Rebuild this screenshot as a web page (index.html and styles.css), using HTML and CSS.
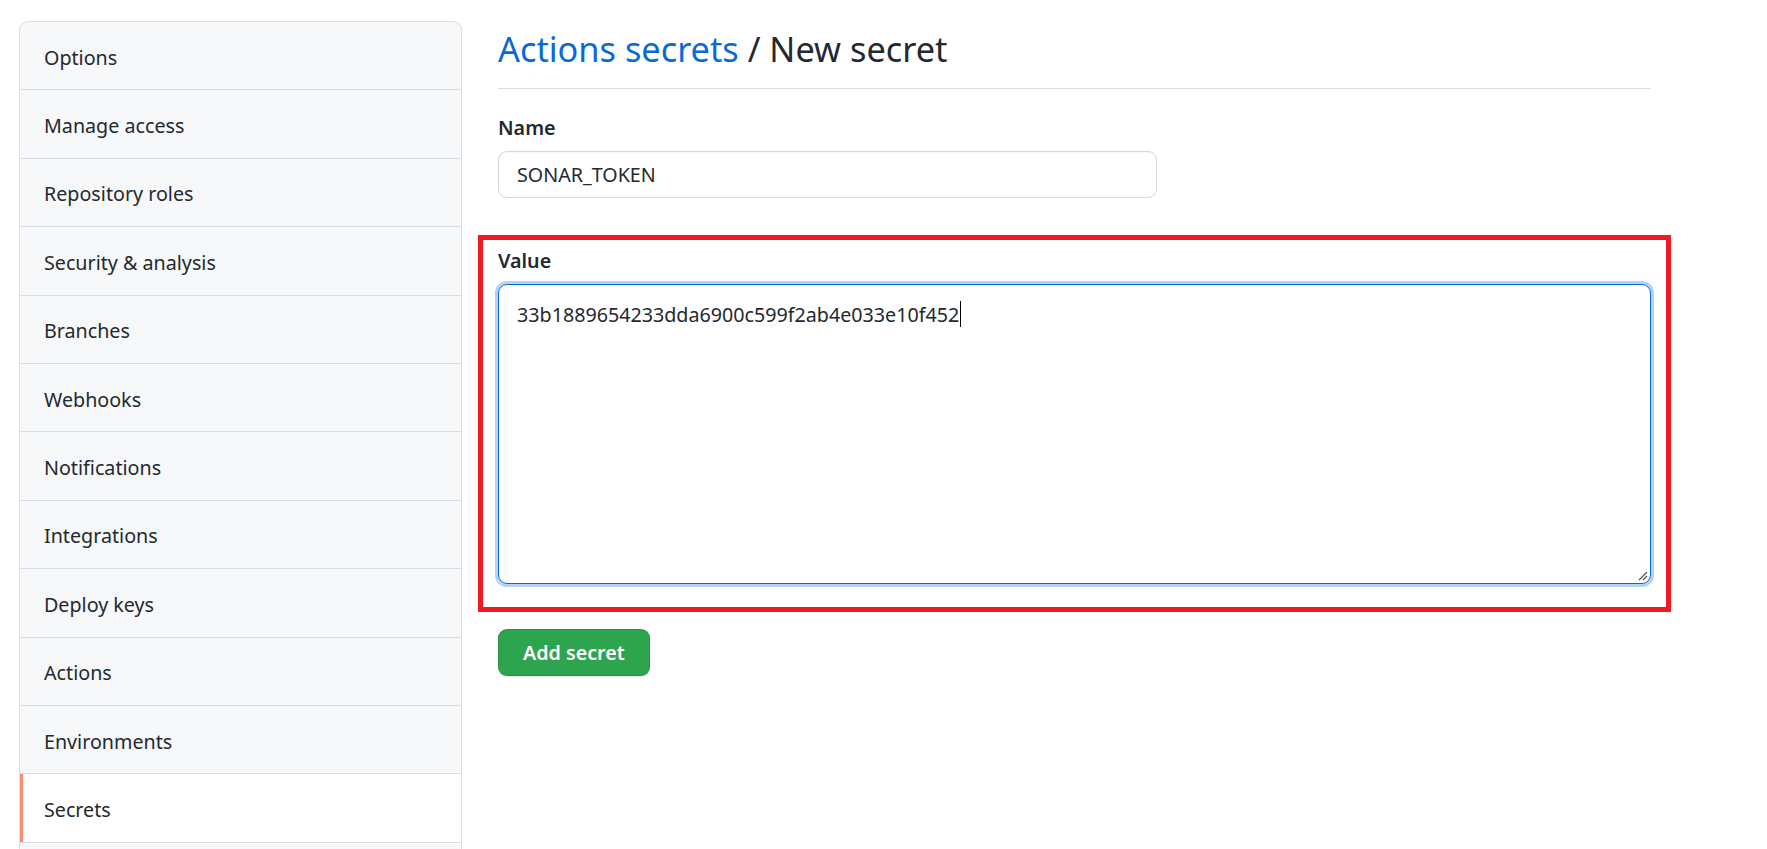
FILE: index.html
```html
<!DOCTYPE html>
<html lang="en">
<head>
<meta charset="utf-8">
<title>Actions secrets / New secret</title>
<link rel="stylesheet" href="styles.css">
</head>
<body>
<div class="layout">
  <nav class="menu">
    <a class="menu-item">Options</a>
    <a class="menu-item">Manage access</a>
    <a class="menu-item">Repository roles</a>
    <a class="menu-item">Security &amp; analysis</a>
    <a class="menu-item">Branches</a>
    <a class="menu-item">Webhooks</a>
    <a class="menu-item">Notifications</a>
    <a class="menu-item">Integrations</a>
    <a class="menu-item">Deploy keys</a>
    <a class="menu-item">Actions</a>
    <a class="menu-item">Environments</a>
    <a class="menu-item selected">Secrets</a>
  </nav>
  <main class="main">
    <div class="subhead">
      <h2 class="subhead-heading"><a class="crumb">Actions secrets</a> / New secret</h2>
    </div>
    <div class="form-group">
      <label class="label">Name</label>
      <input class="input" type="text" value="SONAR_TOKEN">
    </div>
    <div class="highlight">
      <label class="label">Value</label>
      <div class="textarea">
        <span class="value-text">33b1889654233dda6900c599f2ab4e033e10f452</span><span class="caret"></span>
        <svg class="grip" width="10" height="10" viewBox="0 0 10 10"><path d="M9 1L1 9M9 5L5 9" stroke="#555" stroke-width="1.2"/></svg>
      </div>
    </div>
    <button class="btn">Add secret</button>
  </main>
</div>
</body>
</html>
```

FILE: styles.css
```css
* { box-sizing: border-box; }
html, body { margin: 0; background: #fff; }
body {
  font-family: "Noto Sans", "Open Sans", sans-serif;
  color: #24292f;
  font-size: 19.7px;
}
.layout {
  display: flex;
  gap: 36px;
  padding: 21px 0 0 19px;
  align-items: flex-start;
}
.menu {
  width: 443px;
  flex: none;
  display: flex;
  flex-direction: column;
  background: #f6f8fa;
  border: 1px solid #d8dee4;
  border-bottom: 0;
  border-radius: 9px 9px 0 0;
  padding-bottom: 20px;
  overflow: hidden;
}
.menu-item {
  display: flex;
  align-items: center;
  height: 68.4px;
  padding: 3px 0 0 24px;
  border-bottom: 1px solid #d8dee4;
  color: #24292f;
  font-size: 19.7px;
}
.menu-item.selected {
  background: #fff;
  box-shadow: inset 3px 0 0 #fd8c73;
}
.main {
  width: 1153px;
  display: flex;
  flex-direction: column;
  align-items: flex-start;
}
.subhead {
  align-self: stretch;
  border-bottom: 1px solid #d8dee4;
  padding-top: 1px;
  padding-bottom: 12px;
  margin-bottom: 23px;
}
.subhead-heading {
  margin: 0;
  font-size: 34.3px;
  font-weight: 400;
  line-height: 54px;
}
.crumb { color: #0969da; }
.form-group {
  display: flex;
  flex-direction: column;
  align-items: flex-start;
}
.label {
  font-weight: 600;
  font-size: 19.7px;
  line-height: 31px;
  margin-bottom: 8px;
}
.input {
  width: 659px;
  height: 47px;
  border: 1px solid #d0d7de;
  border-radius: 9px;
  padding: 0 18px;
  font-family: inherit;
  font-size: 19.7px;
  color: #24292f;
  background: #fff;
  box-shadow: inset 0 1px 0 rgba(208,215,222,0.2);
}
.highlight {
  align-self: stretch;
  margin: 37px -20px 0 -20px;
  border: 5px solid #ed1c24;
  padding: 5px 15px 23px 15px;
  display: flex;
  flex-direction: column;
  align-items: stretch;
}
.highlight .label { align-self: flex-start; }
.textarea {
  position: relative;
  height: 300px;
  border: 1px solid #0969da;
  border-radius: 9px;
  box-shadow: 0 0 0 3px rgba(9,105,218,0.3);
  padding: 14px 18px;
  font-size: 19.7px;
  line-height: 31px;
  display: block;
}
.caret {
  display: inline-block;
  width: 1px;
  height: 26px;
  background: #000;
  vertical-align: -5px;
  margin-left: 1px;
}
.grip {
  position: absolute;
  right: 2px;
  bottom: 2px;
}
.btn {
  margin-top: 17px;
  height: 47px;
  padding: 0 24px;
  border: 1px solid rgba(27,31,36,0.15);
  border-radius: 9px;
  background: #2da44e;
  color: #fff;
  font-family: inherit;
  font-size: 19.7px;
  font-weight: 600;
  box-shadow: 0 1px 0 rgba(27,31,36,0.1);
}
```
